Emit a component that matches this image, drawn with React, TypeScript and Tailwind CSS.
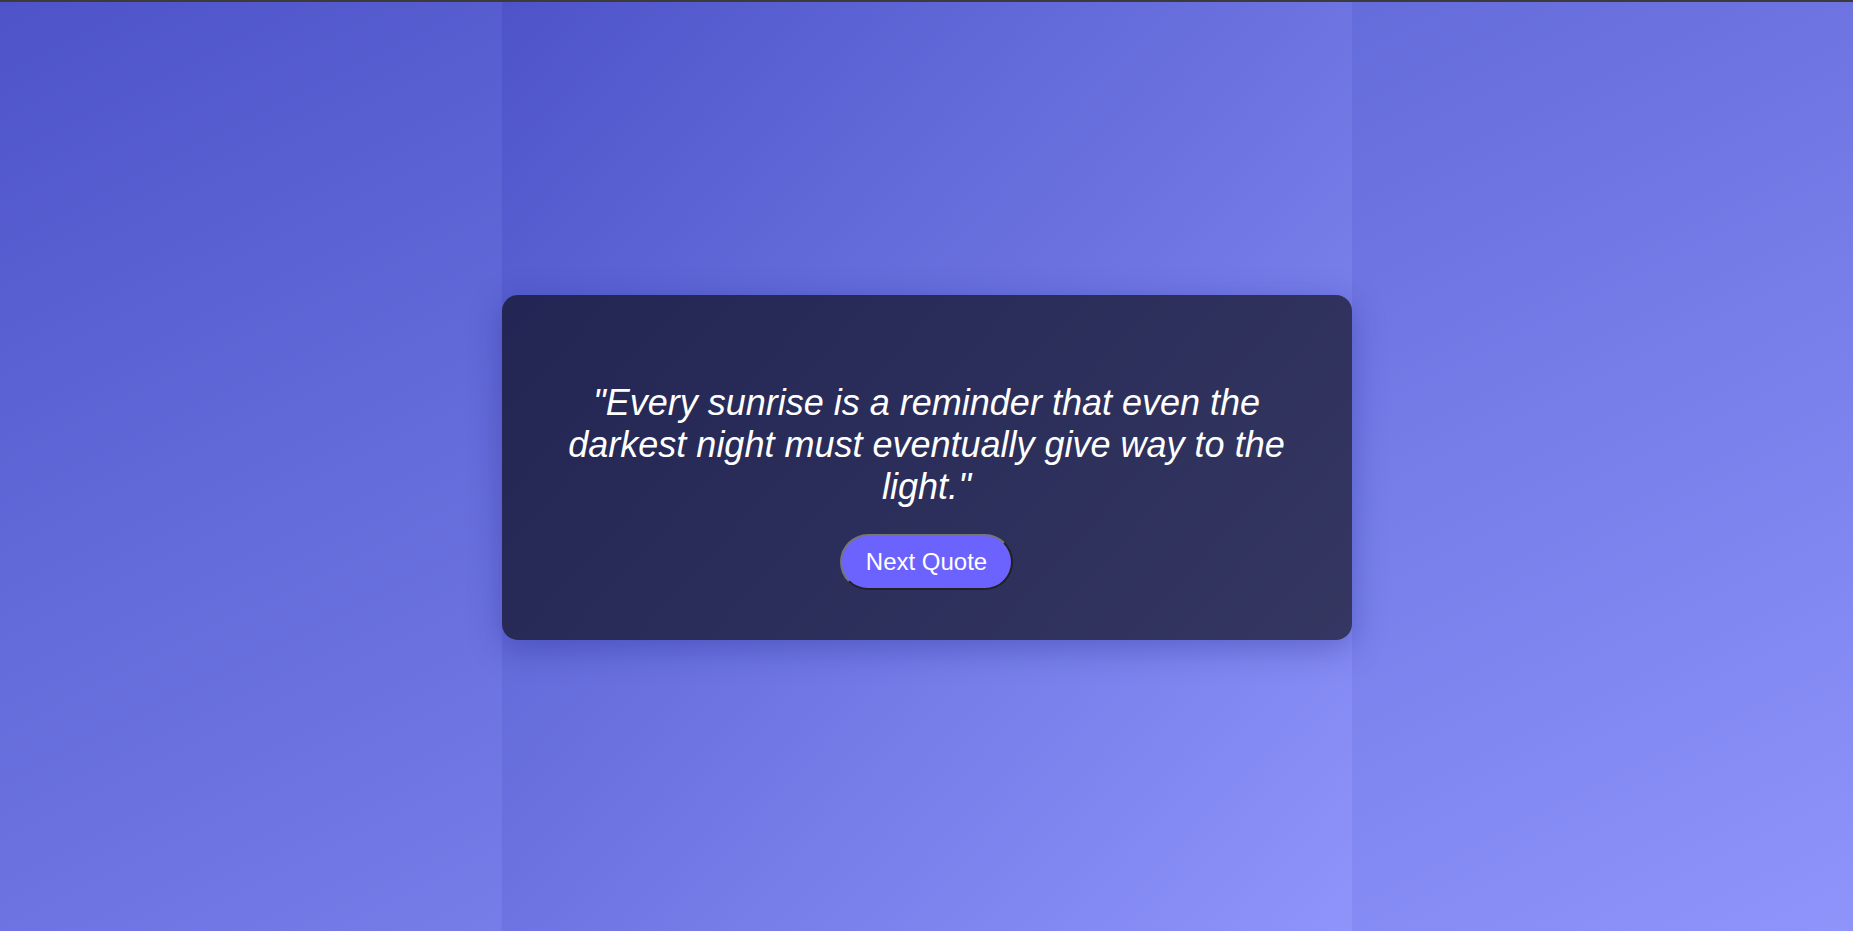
import { useState } from "react";

const quotes = [
  "Every sunrise is a reminder that even the darkest night must eventually give way to the light.",
  "The best way to predict the future is to create it.",
  "Small steps every day add up to big results.",
];

export default function App() {
  const [index, setIndex] = useState(0);

  return (
    <div className="h-screen w-full flex flex-col overflow-hidden bg-gradient-to-br from-[#4e54c8] to-[#8f94fb] font-['Liberation_Sans',Arial,sans-serif]">
      {/* barra superior */}
      <div className="h-[2px] w-full bg-[#3b3b3b]" />

      <div className="flex-1 flex justify-center">
        {/* columna central */}
        <div className="w-[850px] h-full pt-[2px] flex items-center bg-gradient-to-br from-[#4e54c8] to-[#8f94fb]">
          {/* tarjeta */}
          <div className="w-full rounded-2xl bg-black/60 shadow-[0_8px_32px_rgba(31,38,135,0.37)] px-10 pt-[87px] pb-[50px] flex flex-col items-center">
            <p className="text-[36px] leading-[normal] italic text-white text-center">
              "{quotes[index]}"
            </p>
            <button
              onClick={() => setIndex((index + 1) % quotes.length)}
              className="mt-[26px] rounded-full bg-[#6c63ff] px-6 py-3 text-2xl leading-[normal] text-white border-2 [border-style:outset] border-[#767676] cursor-pointer"
            >
              Next Quote
            </button>
          </div>
        </div>
      </div>
    </div>
  );
}
